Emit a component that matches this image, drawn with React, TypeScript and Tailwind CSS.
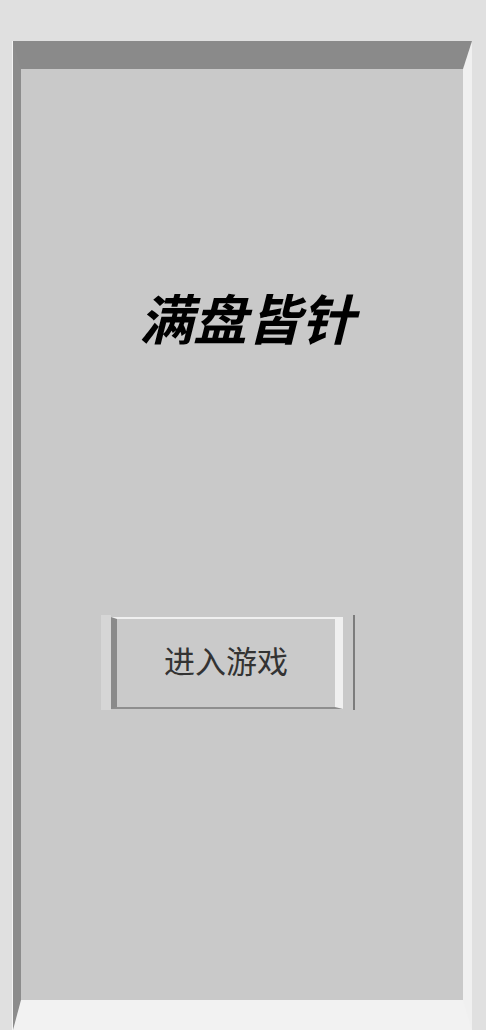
export default function App() {
  return (
    <div
      className="w-[486px] h-[1030px] overflow-hidden bg-[#e0e0e0] pl-[13px] pt-[41px]"
      style={{ fontFamily: '"Noto Sans", "Noto Sans CJK SC", sans-serif' }}
    >
      <div className="relative w-[459px] h-[989px] border-t-[28px] border-l-[8px] border-r-[9px] border-b-[30px] border-t-[#8a8a8a] border-l-[#8c8c8c] border-r-[#f0f0f0] border-b-[#f2f2f2] bg-[#c9c9c9] shadow-[-1px_0_0_#f4f4f4]">
        <div className="flex flex-col">
          <h1 className="mt-[223px] self-center pl-[10px] text-[54px] leading-none font-bold italic text-black">
            满盘皆针
          </h1>
          <div className="mt-[269px] ml-[80px] w-[254px] h-[95px] flex border-r-2 border-r-[#7c7c7c] bg-[#c9c9c9]">
            <div className="w-[10px] h-full bg-[#d6d6d6]" />
            <button className="w-[232px] h-[92px] mt-[2px] flex items-center justify-center pb-[3px] border-l-[6px] border-t-2 border-r-[8px] border-b-2 border-l-[#8a8a8a] border-t-[#f0f0f0] border-r-[#f0f0f0] border-b-[#8e8e8e] bg-[#cacaca] text-[31px] text-[#333333] leading-none">
              进入游戏
            </button>
          </div>
        </div>
      </div>
    </div>
  );
}
